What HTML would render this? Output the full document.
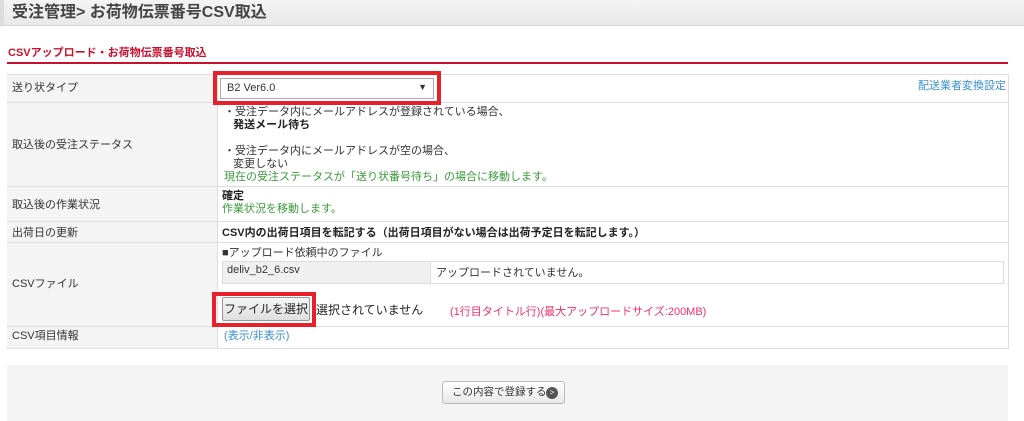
<!DOCTYPE html>
<html><head><meta charset="utf-8"><style>
*{margin:0;padding:0;box-sizing:border-box}
body{width:1024px;height:421px;background:#fff;font-family:"Liberation Sans","Noto Sans CJK JP",sans-serif;font-size:11px;color:#333;position:relative;overflow:hidden}
.a{position:absolute;white-space:nowrap}
.hdr{left:0;top:0;width:1024px;height:26px;background:linear-gradient(#f4f4f4,#e9e9e9);border-bottom:1px solid #d8d8d8;border-left:4px solid #ddd}
.lab{position:absolute;left:7px;width:210px;background:#f4f4f4;border-bottom:1px solid #ddd}
.row{position:absolute;left:7px;width:1001px;border-bottom:1px solid #ddd}
.g{color:#3a9a3a}
</style></head><body>
<div class="a hdr"></div>
<div class="a" style="left:12px;top:-2px;font-size:16px;font-weight:bold;color:#444">受注管理&gt; お荷物伝票番号CSV取込</div>
<div class="a" style="left:8px;top:44px;font-size:11px;font-weight:bold;color:#c8102e">CSVアップロード・お荷物伝票番号取込</div>
<div class="a" style="left:7px;top:62px;width:1001px;height:2px;background:#c8102e"></div>

<div class="a" style="left:7px;top:74px;width:1002px;height:275px;border:1px solid #ddd"></div>
<div class="lab" style="top:75px;height:28px"></div>
<div class="lab" style="top:103px;height:84px"></div>
<div class="lab" style="top:187px;height:35px"></div>
<div class="lab" style="top:222px;height:21px"></div>
<div class="lab" style="top:243px;height:84px"></div>
<div class="lab" style="top:327px;height:21px;border-bottom:none"></div>
<div class="row" style="top:75px;height:28px"></div>
<div class="row" style="top:103px;height:84px"></div>
<div class="row" style="top:187px;height:35px"></div>
<div class="row" style="top:222px;height:21px"></div>
<div class="row" style="top:243px;height:84px"></div>
<div class="a" style="left:217px;top:75px;width:1px;height:273px;background:#ddd"></div>

<div class="a" style="left:12px;top:79px">送り状タイプ</div>
<div class="a" style="left:12px;top:136px">取込後の受注ステータス</div>
<div class="a" style="left:12px;top:196px">取込後の作業状況</div>
<div class="a" style="left:12px;top:224px">出荷日の更新</div>
<div class="a" style="left:12px;top:275px">CSVファイル</div>
<div class="a" style="left:12px;top:327px">CSV項目情報</div>

<div class="a" style="left:213px;top:71px;width:228px;height:34px;border:4px solid #e8202a"></div>
<div class="a" style="left:220px;top:78px;width:214px;height:21px;border:1px solid #aaa;background:#fff;padding:3px 6px">B2 Ver6.0<span style="position:absolute;right:6px;top:3px;font-size:9px">▼</span></div>
<div class="a" style="left:918px;top:77px;color:#3a8fd0">配送業者変換設定</div>

<div class="a" style="left:224px;top:106px;line-height:13px">・受注データ内にメールアドレスが登録されている場合、<br>&nbsp;&nbsp;&nbsp;<b style="color:#222">発送メール待ち</b><br><br>・受注データ内にメールアドレスが空の場合、<br>&nbsp;&nbsp;&nbsp;変更しない<br><span class="g">現在の受注ステータスが「送り状番号待ち」の場合に移動します。</span></div>
<div class="a" style="left:222px;top:190px;line-height:13px"><b style="color:#222">確定</b><br><span class="g">作業状況を移動します。</span></div>
<div class="a" style="left:222px;top:224px;font-weight:bold;color:#222">CSV内の出荷日項目を転記する（出荷日項目がない場合は出荷予定日を転記します。）</div>

<div class="a" style="left:222px;top:244px">■アップロード依頼中のファイル</div>
<div class="a" style="left:222px;top:261px;width:782px;height:23px;border:1px solid #ddd"></div>
<div class="a" style="left:223px;top:262px;width:208px;height:21px;background:#f0f0f0;border-right:1px solid #ddd"></div>
<div class="a" style="left:227px;top:264px">deliv_b2_6.csv</div>
<div class="a" style="left:436px;top:264px">アップロードされていません。</div>

<div class="a" style="left:212px;top:292px;width:104px;height:35px;border:4px solid #e8202a"></div>
<div class="a" style="left:222px;top:297px;width:88px;height:24px;border:1px solid #999;border-radius:2px;background:linear-gradient(#f6f6f6,#dedede);text-align:center;line-height:22px;font-size:12px;color:#222">ファイルを選択</div>
<div class="a" style="left:316px;top:301px;font-size:12px;color:#222">選択されていません</div>
<div class="a" style="left:450px;top:303px;color:#f0306a">(1行目タイトル行)(最大アップロードサイズ:200MB)</div>

<div class="a" style="left:224px;top:327px;color:#3a8fd0">(表示/非表示)</div>

<div class="a" style="left:7px;top:365px;width:1001px;height:56px;background:#f4f4f4"></div>
<div class="a" style="left:442px;top:381px;width:123px;height:23px;border:1px solid #bbb;border-radius:3px;background:linear-gradient(#fff,#e8e8e8);line-height:21px;padding-left:9px;color:#333;font-size:10.5px">この内容で登録する<span style="position:absolute;left:103px;top:5px;width:12px;height:12px;border-radius:6px;background:#555;color:#fff;font-size:8px;line-height:12px;text-align:center">&gt;</span></div>
</body></html>
